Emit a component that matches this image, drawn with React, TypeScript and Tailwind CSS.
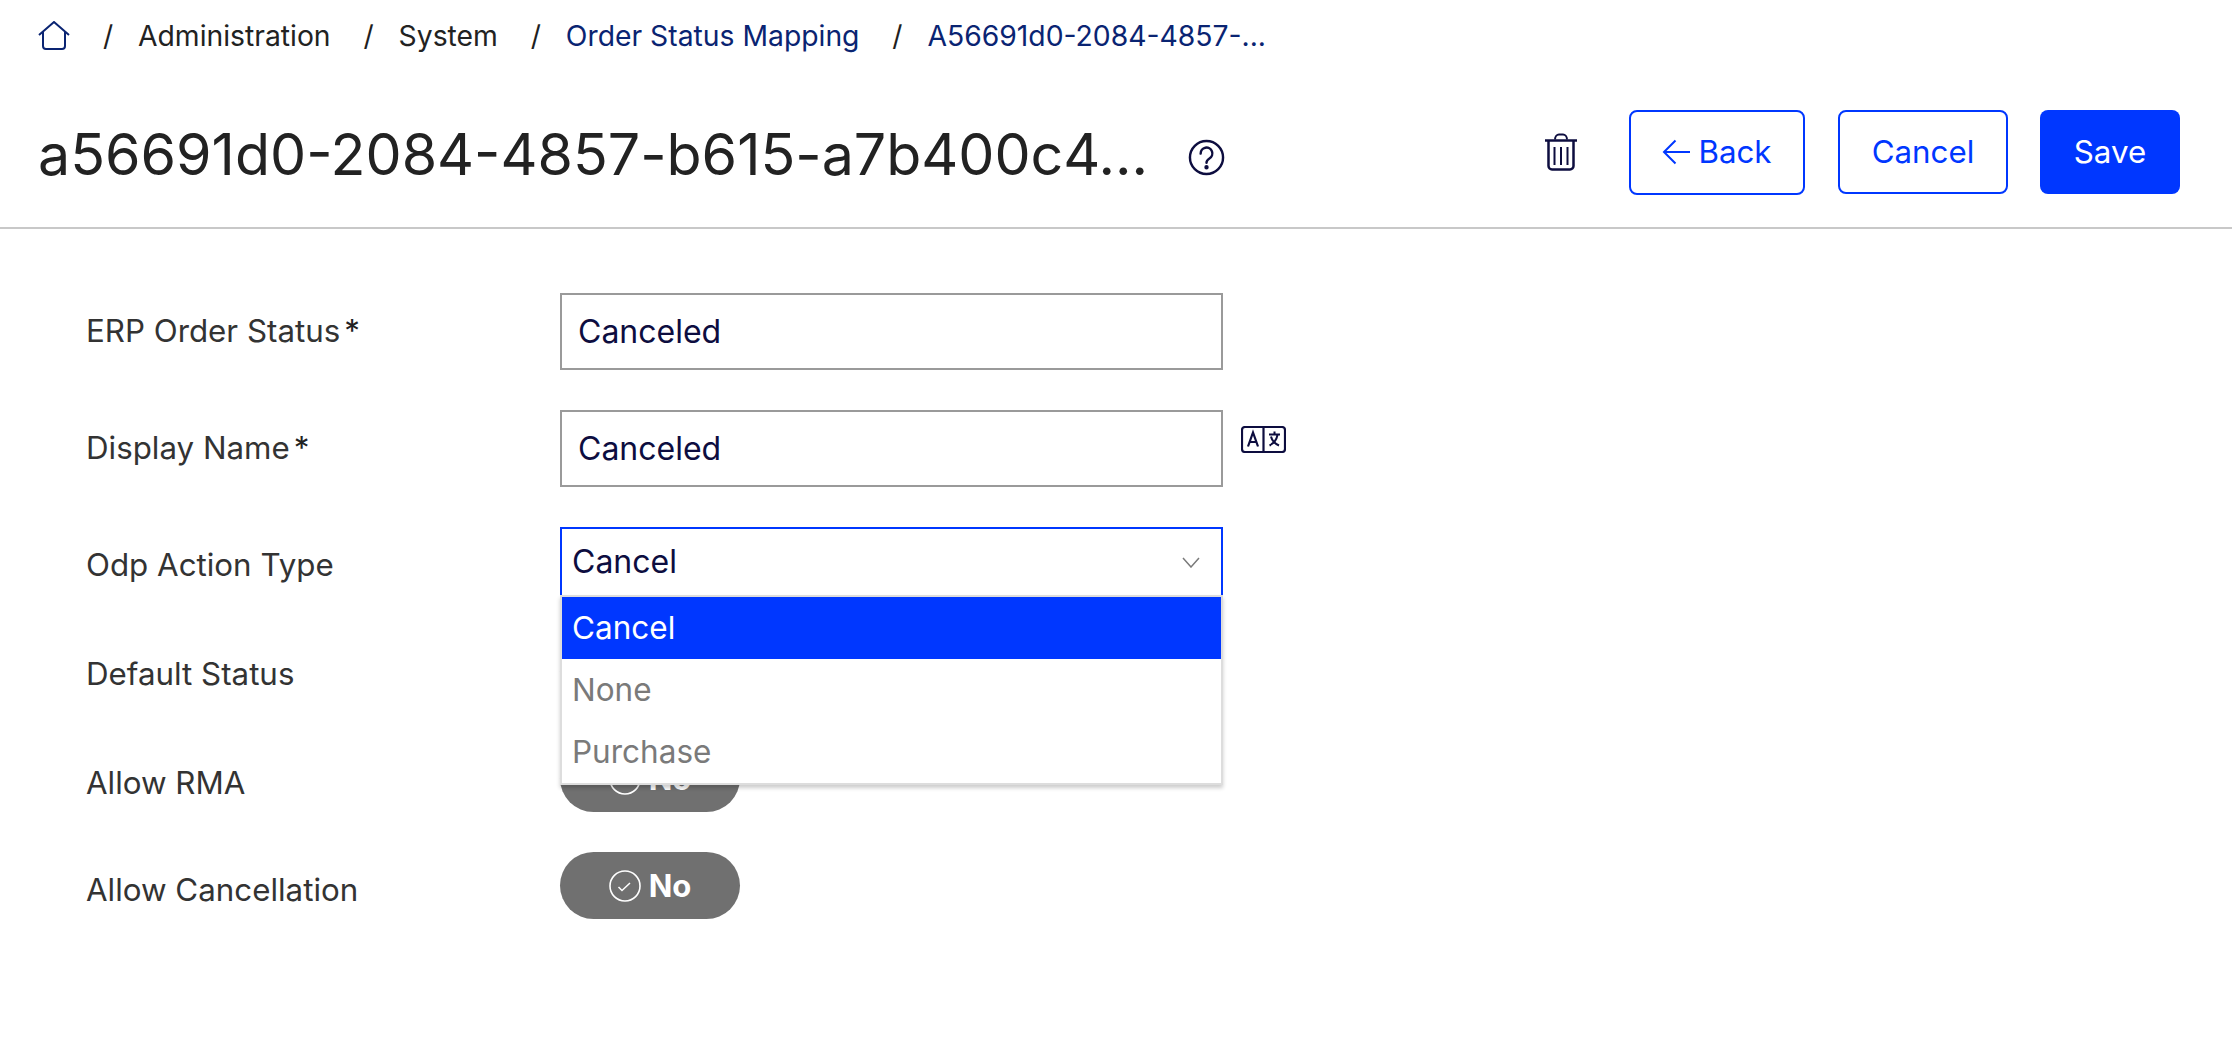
const font = { fontFamily: "Inter, sans-serif" };

function Crumb({ text, link }: { text: string; link?: boolean }) {
  return (
    <div className="flex items-center">
      <span className="w-[68px] pl-[8px] text-center text-[#1f1f1f]">/</span>
      <span className={link ? "text-[#0a2472]" : "text-[#222222]"}>{text}</span>
    </div>
  );
}

function Toggle() {
  return (
    <div className="flex h-[67px] w-[180px] items-center justify-center gap-[8px] rounded-[34px] bg-[#707070] text-white">
      <svg width="32" height="32" viewBox="0 0 32 32" fill="none" stroke="currentColor">
        <circle cx="16" cy="16" r="15" strokeWidth="1.6" />
        <path d="M9.500 17l3.500 3.500 8-7.500" strokeWidth="1.5" />
      </svg>
      <span className="text-[31px] font-bold leading-none">No</span>
    </div>
  );
}

function Label({ text, required }: { text: string; required?: boolean }) {
  return (
    <div className="w-[560px] shrink-0 pl-[86px] text-[31.3px] leading-[40px] text-[#333333]">
      {text}
      {required && <span className="ml-[4px] text-[#222222]">*</span>}
    </div>
  );
}

export default function App() {
  return (
    <div className="h-[1058px] w-[2232px] overflow-hidden bg-white" style={font}>
      {/* breadcrumb */}
      <div className="flex h-[72px] items-center pl-[38px] text-[28.3px]">
        <svg width="32" height="30" viewBox="0 0 32 30" fill="none" stroke="#0a2472" strokeWidth="2">
          <path d="M1 14L16 1l15 13" />
          <path d="M5 11v14a3 3 0 0 0 3 3h16a3 3 0 0 0 3-3V11" />
        </svg>
        <div className="flex items-center">
          <Crumb text="Administration" />
          <Crumb text="System" />
          <Crumb text="Order Status Mapping" link />
          <Crumb text="A56691d0-2084-4857-..." link />
        </div>
      </div>

      {/* page header */}
      <div className="flex h-[157px] items-center border-b-2 border-[#c8c8c8] pl-[38px] pr-[52px] pt-[5px]">
        <h1 className="mt-[6px] text-[57.300px] font-normal leading-none text-[#222222]">a56691d0-2084-4857-b615-a7b400c4...</h1>
        <svg className="ml-[40px] mt-[10px]" width="37" height="37" viewBox="0 0 38 38" fill="none" stroke="#0d0d3f" strokeWidth="2.5">
          <circle cx="19" cy="19" r="17" />
          <path d="M13 15a6 6 0 1 1 9 5c-2 1.200-3 2-3 4.500" strokeLinecap="round" />
          <circle cx="19" cy="29" r="1" fill="#0d0d3f" />
        </svg>
        <svg className="ml-auto" width="32" height="38" viewBox="0 0 32 38" fill="none" stroke="#0d0d3f" strokeWidth="2.5">
          <path d="M0 7.500h32" />
          <path d="M10 6.500c0-3 2-5 4-5h4c2 0 4 2 4 5" strokeWidth="2" />
          <path d="M3.500 8v25a3.500 3.500 0 0 0 3.500 3.500h18a3.500 3.500 0 0 0 3.500-3.500V8" />
          <path d="M9.500 14v18M16 14v18M22.500 14v18" strokeWidth="2" />
        </svg>
        <button className="ml-[52px] flex h-[85px] w-[176px] items-center justify-center gap-[8px] rounded-[8px] border-2 border-[#0037ff] text-[31.3px] text-[#0037ff]">
          <svg width="28" height="26" viewBox="0 0 28 26" fill="none" stroke="currentColor" strokeWidth="2">
            <path d="M13.500 1.500L2 13l11.500 11.500M2 13h26" />
          </svg>
          Back
        </button>
        <button className="ml-[33px] h-[84px] w-[170px] rounded-[8px] border-2 border-[#0037ff] text-[31.3px] text-[#0037ff]">Cancel</button>
        <button className="ml-[32px] h-[84px] w-[140px] rounded-[8px] bg-[#0037ff] text-[31.3px] text-white">Save</button>
      </div>

      {/* form */}
      <div className="flex flex-col pt-[64px]">
        <div className="flex items-start">
          <div className="pt-[18px]"><Label text="ERP Order Status" required /></div>
          <div className="flex h-[77px] w-[663px] items-center border-2 border-[#9a9a9a] pl-[16px] text-[32px] text-[#0d0d3f]">Canceled</div>
        </div>

        <div className="mt-[40px] flex items-start">
          <div className="pt-[18px]"><Label text="Display Name" required /></div>
          <div className="flex h-[77px] w-[663px] items-center border-2 border-[#9a9a9a] pl-[16px] text-[32px] text-[#0d0d3f]">Canceled</div>
          <svg className="ml-[18px] mt-[16px]" width="45" height="27" viewBox="0 0 45 27" fill="none" stroke="#0d0d3f" strokeWidth="2.2">
            <rect x="1" y="1" width="43" height="25" rx="3" />
            <path d="M22.500 1v25" />
            <path d="M7 20.500l5-14 5 14M9 16h6" />
            <path d="M28 8.500h11M33.500 5.500v3M36.500 9c-1 5-4 8.500-8 10.500M30 10.500c1 4 4.500 7.500 8 9" strokeWidth="2" />
          </svg>
        </div>

        <div className="relative mt-[40px] flex h-[77px] items-start">
          <div className="pt-[18px]"><Label text="Odp Action Type" /></div>
          <div className="relative h-[68px] w-[663px] border-2 border-b-0 border-[#0037ff] pl-[10px] pt-[13px] text-[32px] leading-[40px] text-[#0d0d3f]">
            Cancel
            <svg className="absolute right-[21px] top-[28px]" width="18" height="11" viewBox="0 0 18 11" fill="none" stroke="#7a7a7a" strokeWidth="1.5">
              <path d="M1 1l8 9 8-9" />
            </svg>
          </div>

          {/* open dropdown */}
          <div className="absolute left-[560px] top-[68px] z-10 w-[663px] border-2 border-[#dddddd] bg-white text-[31.5px] shadow-[0_3px_4px_rgba(0,0,0,0.2)]">
            <div className="flex h-[62px] items-center bg-[#0037ff] pl-[10px] text-white">Cancel</div>
            <div className="flex h-[62px] items-center pl-[10px] text-[#7a7a7a]">None</div>
            <div className="flex h-[62px] items-center pl-[10px] text-[#7a7a7a]">Purchase</div>
          </div>
        </div>

        <div className="mt-[34px] flex items-start">
          <div className="pt-[16px]"><Label text="Default Status" /></div>
          <Toggle />
        </div>

        <div className="mt-[40px] flex items-start">
          <div className="pt-[18px]"><Label text="Allow RMA" /></div>
          <Toggle />
        </div>

        <div className="mt-[40px] flex items-start">
          <div className="pt-[18px]"><Label text="Allow Cancellation" /></div>
          <Toggle />
        </div>
      </div>
    </div>
  );
}
